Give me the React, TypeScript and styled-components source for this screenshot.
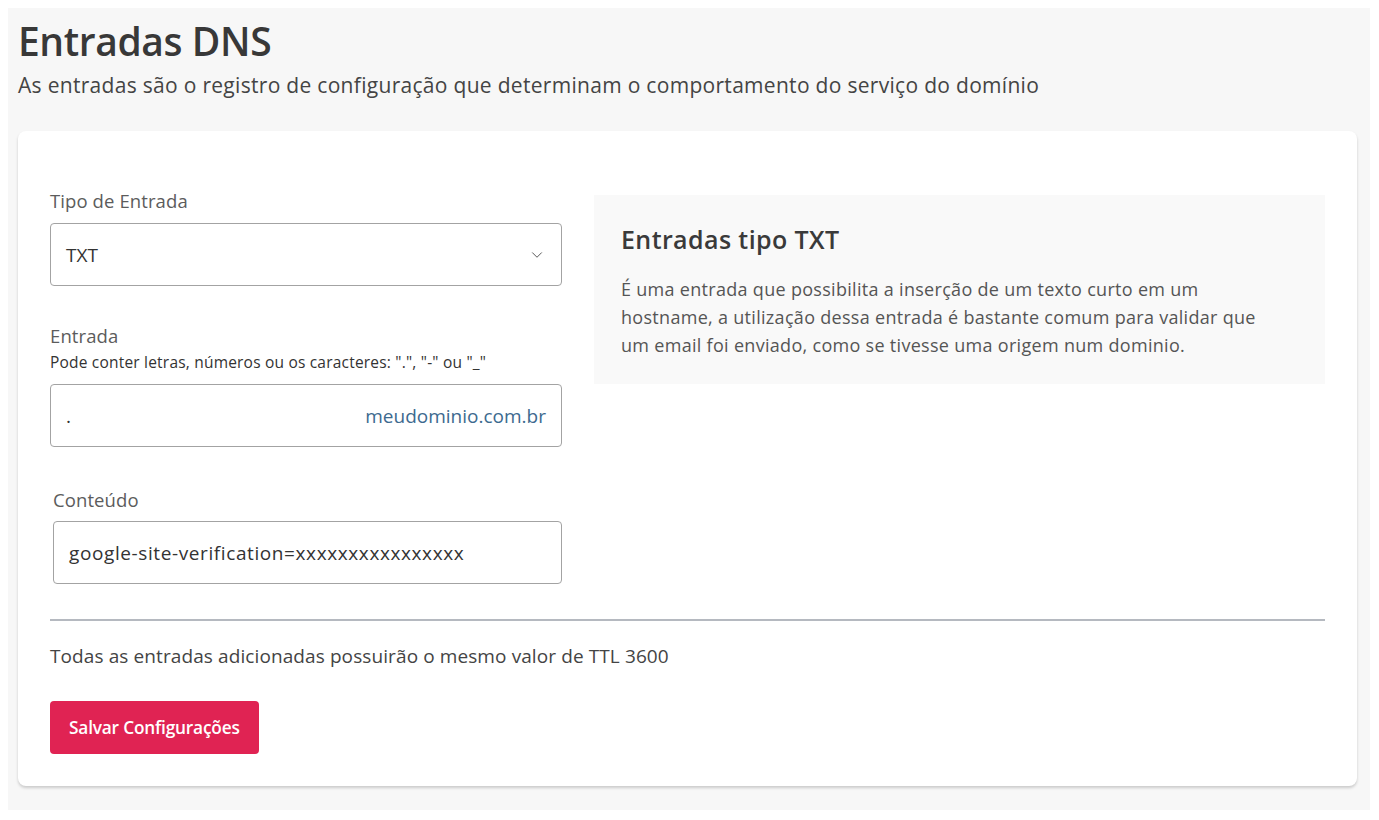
import React, { useState } from 'react';
import styled, { createGlobalStyle } from 'styled-components';
import { ChevronDown } from 'lucide-react';

const GlobalStyle = createGlobalStyle`
  body {
    margin: 8px;
    background: #ffffff;
    font-family: "Open Sans", "Noto Sans", sans-serif;
    color: #333;
  }
  * { box-sizing: border-box; }
`;

const Page = styled.div`
  background: #f7f7f7;
  width: 1362px;
  min-height: 802px;
  padding: 9px 13px 23px 10px;
`;

const Title = styled.h1`
  margin: 0;
  font-size: 39px;
  font-weight: 600;
  color: #383838;
  letter-spacing: -0.4px;
  line-height: 48px;
`;

const Subtitle = styled.p`
  margin: 6px 0 0;
  font-size: 21px;
  color: #444;
  line-height: 28px;
  letter-spacing: 0.3px;
`;

const Card = styled.section`
  margin-top: 32px;
  background: #fff;
  border-radius: 8px;
  box-shadow: 0 2px 3px rgba(0, 0, 0, 0.18);
  padding: 57px 32px 32px 32px;
`;

const Columns = styled.div`
  display: grid;
  grid-template-columns: 512px 1fr;
  column-gap: 32px;
  align-items: start;
`;

const Form = styled.div`
  display: flex;
  flex-direction: column;
`;

const Field = styled.div<{ $indent?: number; $mt?: number }>`
  display: flex;
  flex-direction: column;
  margin-top: ${(p) => p.$mt ?? 0}px;
  padding-left: ${(p) => p.$indent ?? 0}px;
`;

const Label = styled.label`
  font-size: 18.5px;
  color: #5c5c5c;
  line-height: 26px;
  letter-spacing: 0.1px;
`;

const Hint = styled.span`
  font-size: 15.5px;
  color: #333;
  line-height: 20px;
  margin-top: 3px;
  letter-spacing: 0.2px;
`;

const Box = styled.div<{ $mt?: number }>`
  margin-top: ${(p) => p.$mt ?? 9}px;
  height: 63px;
  border: 1px solid #a3a3a3;
  border-radius: 4px;
  display: flex;
  align-items: center;
  justify-content: space-between;
  padding: 0 15px 0 15px;
  font-size: 19px;
  color: #333;
  background: #fff;
`;

const Value = styled.span<{ $spacing?: number }>`
  letter-spacing: ${(p) => p.$spacing ?? 0}px;
`;

const Suffix = styled.span`
  color: #3d6a8f;
`;

const Info = styled.aside`
  margin-top: 7px;
  background: #f9f9f9;
  padding: 28px 27px 25px 27px;
  min-height: 189px;
`;

const InfoTitle = styled.h2`
  margin: 0;
  font-size: 25px;
  font-weight: 600;
  color: #3a3a3a;
  line-height: 32px;
  letter-spacing: 0.4px;
`;

const InfoText = styled.p`
  margin: 20px 0 0;
  font-size: 18px;
  line-height: 28px;
  color: #555;
  max-width: 660px;
  letter-spacing: 0.3px;
`;

const Divider = styled.hr`
  margin: 35px 0 0;
  border: none;
  border-top: 2px solid #b5b9c0;
`;

const Note = styled.p`
  margin: 22px 0 0;
  font-size: 19px;
  color: #444;
  line-height: 26px;
  letter-spacing: 0.1px;
`;

const SaveButton = styled.button`
  margin-top: 32px;
  height: 53px;
  padding: 0 19px;
  border: none;
  border-radius: 4px;
  background: #e02353;
  color: #fff;
  font-family: "Open Sans", sans-serif;
  font-size: 17.3px;
  font-weight: 600;
  letter-spacing: -0.2px;
  cursor: pointer;
`;

export default function App() {
  const [tipo] = useState('TXT');

  return (
    <>
      <GlobalStyle />
      <Page>
        <Title>Entradas DNS</Title>
        <Subtitle>
          As entradas são o registro de configuração que determinam o comportamento do serviço do domínio
        </Subtitle>
        <Card>
          <Columns>
            <Form>
              <Field>
                <Label>Tipo de Entrada</Label>
                <Box>
                  <Value>{tipo}</Value>
                  <ChevronDown size={18} strokeWidth={1.3} color="#555" />
                </Box>
              </Field>
              <Field $mt={37}>
                <Label>Entrada</Label>
                <Hint>Pode conter letras, números ou os caracteres: ".", "-" ou "_"</Hint>
                <Box $mt={12}>
                  <Value>.</Value>
                  <Suffix>meudominio.com.br</Suffix>
                </Box>
              </Field>
              <Field $mt={40} $indent={3}>
                <Label>Conteúdo</Label>
                <Box $mt={8}>
                  <Value $spacing={0.6}>google-site-verification=xxxxxxxxxxxxxxxx</Value>
                </Box>
              </Field>
            </Form>
            <Info>
              <InfoTitle>Entradas tipo TXT</InfoTitle>
              <InfoText>
                É uma entrada que possibilita a inserção de um texto curto em um hostname, a utilização
                dessa entrada é bastante comum para validar que um email foi enviado, como se tivesse uma
                origem num dominio.
              </InfoText>
            </Info>
          </Columns>
          <Divider />
          <Note>Todas as entradas adicionadas possuirão o mesmo valor de TTL 3600</Note>
          <SaveButton>Salvar Configurações</SaveButton>
        </Card>
      </Page>
    </>
  );
}
